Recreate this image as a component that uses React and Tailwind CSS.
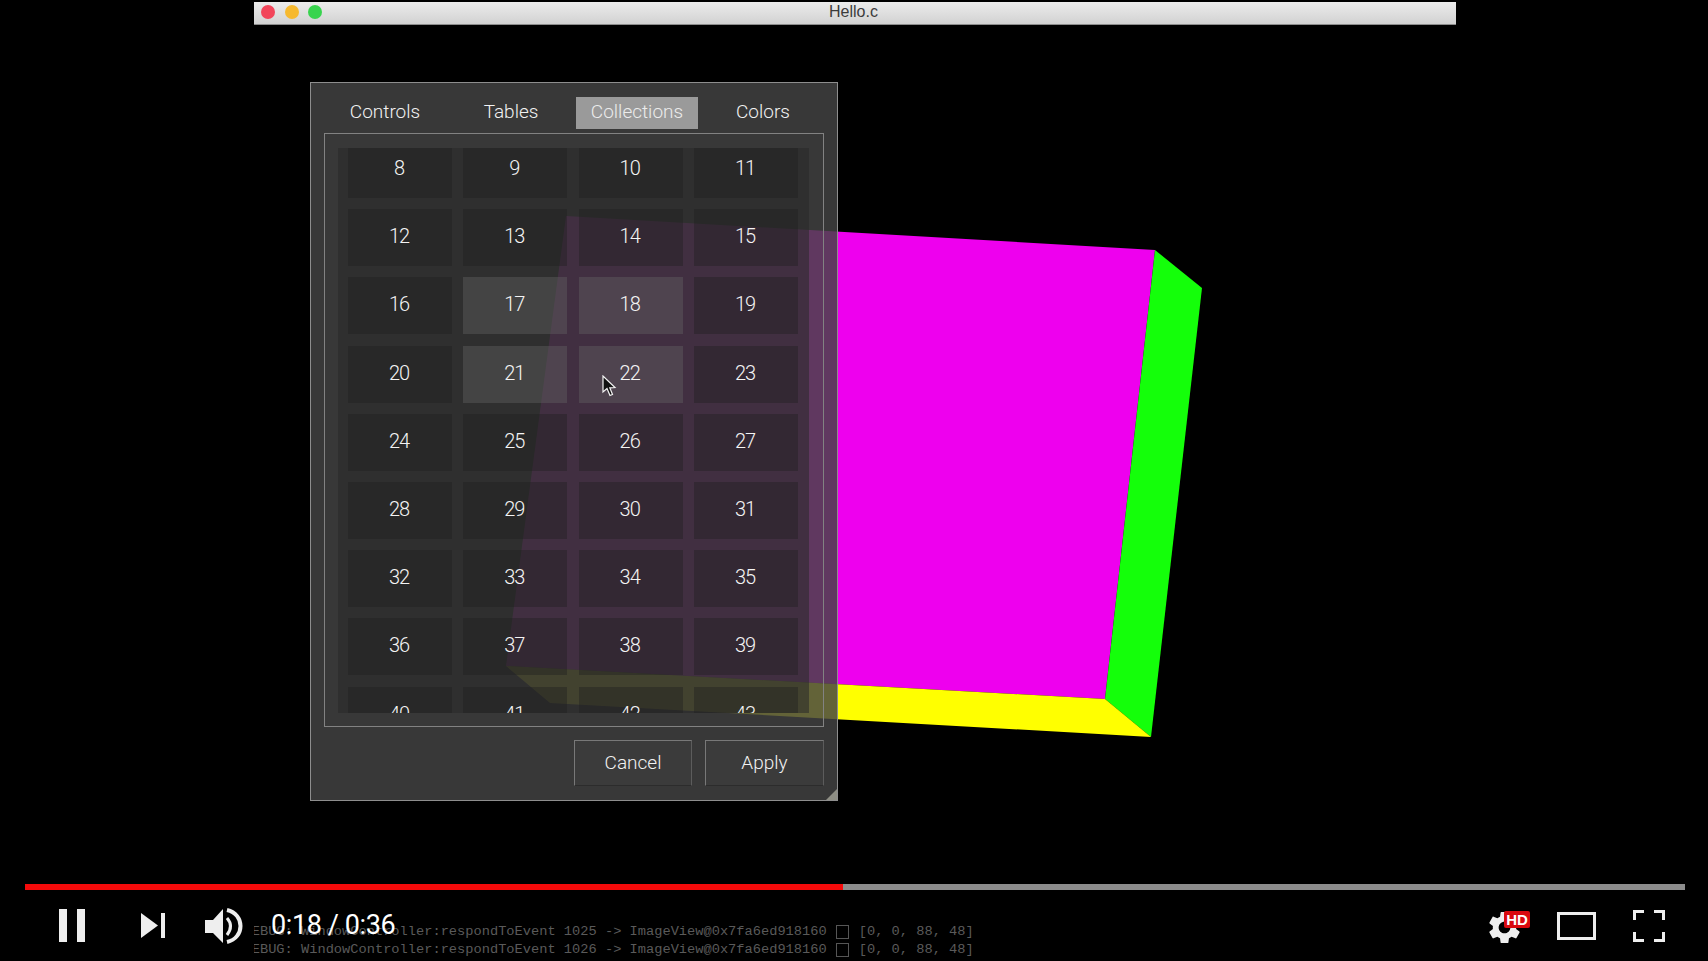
import React from 'react';
import { MdSettings } from 'react-icons/md';

const numbers = Array.from({ length: 36 }, (_, i) => i + 8);
const highlighted = [17, 18, 21, 22];
const tabs = ['Controls', 'Tables', 'Collections', 'Colors'];
const uiFont = "font-['Roboto',sans-serif]";

function Cube() {
    return (
        <svg className="absolute left-0 top-0" width="1708" height="961" viewBox="0 0 1708 961">
            <polygon points="566,216 1155,250 1105,699 506,666" fill="#ee00ee" />
            <polygon points="1155,250 1202,288 1151,737 1105,699" fill="#14ff0a" />
            <polygon points="506,666 1105,699 1151,737 550,703" fill="#ffff00" />
        </svg>
    );
}

function TitleBar() {
    return (
        <div className="relative mt-[2px] ml-[254px] w-[1202px] h-[23px] pb-[2px] pr-[3px] flex items-center justify-center bg-gradient-to-b from-[#ececec] to-[#d2d2d2] border-b border-[#8c8c8c]">
            <div className="absolute left-[7px] top-[3px] flex gap-[9.5px]">
                <span className="w-[14px] h-[14px] rounded-full bg-[#f2455a]" />
                <span className="w-[14px] h-[14px] rounded-full bg-[#f6b92f]" />
                <span className="w-[14px] h-[14px] rounded-full bg-[#38d44e]" />
            </div>
            <span className="text-[16px] text-[#3c3c3c] font-['Liberation_Sans',sans-serif]">Hello.c</span>
        </div>
    );
}

function Panel() {
    return (
        <div className={`relative mt-[57px] ml-[310px] w-[528px] h-[719px] px-[13px] pt-[14px] border border-[#8e8e8e] bg-[rgba(67,67,67,0.83)] ${uiFont}`}>
            <div className="grid grid-cols-4 gap-x-[4px] h-[32px]">
                {tabs.map(tab => (
                    <div
                        key={tab}
                        className={`flex items-center justify-center pb-[1px] text-[19px] font-light ${tab === 'Collections' ? 'bg-[#9a9a9a] text-[#ececec]' : 'text-[#f2f2f2]'}`}
                    >
                        {tab}
                    </div>
                ))}
            </div>

            <div className="mt-[4px] h-[594px] border border-[#828282] pl-[13px] pr-[14px] pt-[14px]">
                <div className="h-[565px] overflow-hidden bg-[rgba(40,40,40,0.55)] pl-[10px] pr-[11px]">
                    <div className="-mt-[7px] grid grid-cols-4 gap-x-[11.3px] gap-y-[11.2px]">
                        {numbers.map(n => (
                            <div
                                key={n}
                                className={`h-[57px] pb-[3px] pr-[2px] flex items-center justify-center text-[20px] font-light tracking-[-1px] text-[#f4f4f4] ${highlighted.includes(n) ? 'bg-[rgba(100,100,100,0.4)]' : 'bg-[rgba(30,30,30,0.4)]'}`}
                            >
                                {n}
                            </div>
                        ))}
                    </div>
                </div>
            </div>

            <div className="mt-[13px] flex justify-end gap-[13px]">
                <button className="w-[118px] h-[46px] border border-t-[#787878] border-l-[#787878] border-r-[#5c5c5c] border-b-[#2c2c2c] bg-[#3b3b3b] text-[19px] font-light text-[#f2f2f2]">Cancel</button>
                <button className="w-[119px] h-[46px] border border-t-[#787878] border-l-[#787878] border-r-[#5c5c5c] border-b-[#2c2c2c] bg-[#3b3b3b] text-[19px] font-light text-[#f2f2f2]">Apply</button>
            </div>

            <svg className="absolute right-0 bottom-0" width="11" height="11" viewBox="0 0 11 11">
                <polygon points="11,0 11,11 0,11" fill="#8e8e84" />
            </svg>
        </div>
    );
}

function Cursor() {
    return (
        <svg className="absolute left-[601px] top-[375px]" width="16" height="23" viewBox="0 0 16 23">
            <path d="M2 1 L2 17 L6 13.5 L9 20.5 L11.5 19.5 L8.8 12.8 L14 12.5 Z" fill="#111" stroke="#f2f2f2" strokeWidth="1.2" />
        </svg>
    );
}

function Controls() {
    return (
        <div className="relative mt-[18px] ml-[59px] h-[35px] flex items-center">
            <svg width="26" height="33" viewBox="0 0 26 33">
                <rect x="0" y="0" width="8" height="33" fill="#eeeeee" />
                <rect x="18" y="0" width="8" height="33" fill="#eeeeee" />
            </svg>
            <svg className="ml-[56px]" width="25" height="25" viewBox="0 0 25 25">
                <polygon points="0,0 17,12.5 0,25" fill="#eeeeee" />
                <rect x="20" y="0" width="4" height="25" fill="#eeeeee" />
            </svg>
            <svg className="ml-[39px]" width="38" height="36" viewBox="0 0 38 36">
                <polygon points="0,12 8,12 18,1 18,35 8,25 0,25" fill="#eeeeee" />
                <path d="M22 10 Q29 18 22 27" fill="none" stroke="#eeeeee" strokeWidth="3" />
                <path d="M22 2 C40 6 40 30 22 34" fill="none" stroke="#eeeeee" strokeWidth="4" />
            </svg>
            <span className={`ml-[28px] -mt-[1px] text-[27px] tracking-[-0.4px] text-white ${uiFont}`}>0:18 / 0:36</span>

            <div className="ml-auto mr-[43px] flex items-center">
                <div className="relative w-[40px] h-[35px]">
                    <MdSettings className="absolute -left-[4px] top-0 text-[#eeeeee]" size={39} />
                    <span className="absolute left-[15px] top-[3px] w-[26px] h-[17px] rounded-[2px] bg-[#d90a0f] flex items-center justify-center text-[15px] font-bold leading-none text-white font-['Liberation_Sans',sans-serif]">HD</span>
                </div>
                <div className="ml-[28px] w-[39px] h-[28px] border-[3px] border-[#eeeeee]" />
                <svg className="ml-[37px]" width="32" height="32" viewBox="0 0 32 32">
                    <path d="M1.5 10 V1.5 H11 M21 1.5 H30.5 V10 M30.5 22 V30.5 H21 M11 30.5 H1.5 V22" fill="none" stroke="#eeeeee" strokeWidth="3" />
                </svg>
            </div>
        </div>
    );
}

function LogLine({ id }) {
    return (
        <div className="-ml-[10.5px] flex items-center">
            <span className="whitespace-pre">DEBUG: WindowController:respondToEvent {id} -&gt; ImageView@0x7fa6ed918160</span>
            <span className="ml-[9px] w-[13px] h-[14px] border border-[#565656]" />
            <span className="ml-[10px]">[0, 0, 88, 48]</span>
        </div>
    );
}

function DebugLog() {
    return (
        <div className="absolute left-[254px] top-[923px] w-[725px] overflow-hidden whitespace-nowrap text-[13.7px] leading-[18px] text-[#5a5a5a] font-['Liberation_Mono',monospace]">
            <LogLine id={1025} />
            <LogLine id={1026} />
        </div>
    );
}

export default function App() {
    return (
        <div className="relative w-[1708px] h-[961px] overflow-hidden bg-black">
            <Cube />
            <DebugLog />
            <div className="relative flex flex-col">
                <TitleBar />
                <Panel />
                <div className="mt-[83px] ml-[25px] w-[1660px] h-[6px] bg-[#8c8c8c]">
                    <div className="w-[818px] h-full bg-[#f50a0a]" />
                </div>
                <Controls />
            </div>
            <Cursor />
        </div>
    );
}
